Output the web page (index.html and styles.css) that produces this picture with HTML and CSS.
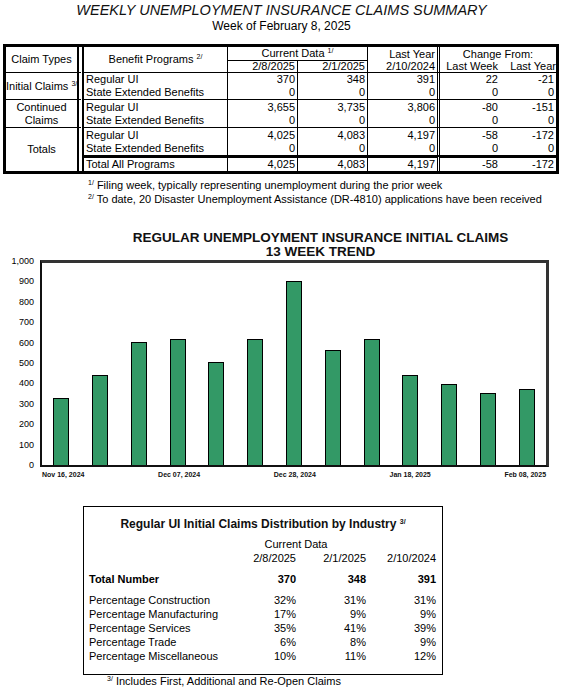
FILE: index.html
```html
<!DOCTYPE html>
<html lang="en">
<head>
    <meta charset="UTF-8">
    <meta name="viewport" content="width=device-width, initial-scale=1.0">
    <title>Weekly Unemployment Insurance Claims Summary</title>
    <link rel="stylesheet" href="styles.css">
</head>
<body>
    <div class="page">
        <div class="header">
            <h1>WEEKLY UNEMPLOYMENT INSURANCE CLAIMS SUMMARY</h1>
            <div class="subtitle">Week of February 8, 2025</div>
        </div>

        <!-- Summary table -->
        <table class="summary">
            <colgroup>
                <col class="c-type">
                <col class="c-prog">
                <col class="c-num">
                <col class="c-num">
                <col class="c-year">
                <col class="c-week">
                <col class="c-last">
            </colgroup>
            <thead>
                <tr class="head-1">
                    <th class="ct end" rowspan="2">Claim Types</th>
                    <th class="prog end" rowspan="2">Benefit Programs <sup>2/</sup></th>
                    <th class="n end" colspan="2">Current Data <sup>1/</sup></th>
                    <th class="ly right">Last Year</th>
                    <th colspan="2">Change From:</th>
                </tr>
                <tr class="head-2">
                    <th class="n end right">2/8/2025</th>
                    <th class="n end right">2/1/2025</th>
                    <th class="ly end right">2/10/2024</th>
                    <th class="end right">Last Week</th>
                    <th class="end right last">Last Year</th>
                </tr>
            </thead>
            <tbody>
                <tr>
                    <td class="ct end" rowspan="2">Initial Claims <sup>3/</sup></td>
                    <td class="prog">Regular UI</td>
                    <td class="n">370</td>
                    <td class="n">348</td>
                    <td class="ly">391</td>
                    <td class="num">22</td>
                    <td class="num">-21</td>
                </tr>
                <tr class="end">
                    <td class="prog">State Extended Benefits</td>
                    <td class="n">0</td>
                    <td class="n">0</td>
                    <td class="ly">0</td>
                    <td class="num">0</td>
                    <td class="num">0</td>
                </tr>
                <tr class="tall">
                    <td class="ct end" rowspan="2">Continued<br>Claims</td>
                    <td class="prog">Regular UI</td>
                    <td class="n">3,655</td>
                    <td class="n">3,735</td>
                    <td class="ly">3,806</td>
                    <td class="num">-80</td>
                    <td class="num">-151</td>
                </tr>
                <tr class="end">
                    <td class="prog">State Extended Benefits</td>
                    <td class="n">0</td>
                    <td class="n">0</td>
                    <td class="ly">0</td>
                    <td class="num">0</td>
                    <td class="num">0</td>
                </tr>
                <tr class="tall">
                    <td class="ct" rowspan="3">Totals</td>
                    <td class="prog">Regular UI</td>
                    <td class="n">4,025</td>
                    <td class="n">4,083</td>
                    <td class="ly">4,197</td>
                    <td class="num">-58</td>
                    <td class="num">-172</td>
                </tr>
                <tr>
                    <td class="prog">State Extended Benefits</td>
                    <td class="n">0</td>
                    <td class="n">0</td>
                    <td class="ly">0</td>
                    <td class="num">0</td>
                    <td class="num">0</td>
                </tr>
                <tr class="grand">
                    <td class="prog">Total All Programs</td>
                    <td class="n">4,025</td>
                    <td class="n">4,083</td>
                    <td class="ly">4,197</td>
                    <td class="num">-58</td>
                    <td class="num">-172</td>
                </tr>
            </tbody>
        </table>

        <div class="notes">
            <div><sup>1/</sup> Filing week, typically representing unemployment during the prior week</div>
            <div><sup>2/</sup> To date, 20 Disaster Unemployment Assistance (DR-4810) applications have been received</div>
        </div>

        <!-- 13 week bar chart -->
        <div class="chart">
            <h2 class="chart-title">REGULAR UNEMPLOYMENT INSURANCE INITIAL CLAIMS<br>13 WEEK TREND</h2>
            <div class="chart-body">
                <div class="y-axis">
                    <span>1,000</span><span>900</span><span>800</span><span>700</span><span>600</span>
                    <span>500</span><span>400</span><span>300</span><span>200</span><span>100</span><span>0</span>
                </div>
                <div class="plot">
                    <div class="slot"><div class="bar" style="height: 67px"></div></div>
                    <div class="slot"><div class="bar" style="height: 90px"></div></div>
                    <div class="slot"><div class="bar" style="height: 123px"></div></div>
                    <div class="slot"><div class="bar" style="height: 126px"></div></div>
                    <div class="slot"><div class="bar" style="height: 103px"></div></div>
                    <div class="slot"><div class="bar" style="height: 126px"></div></div>
                    <div class="slot"><div class="bar" style="height: 184px"></div></div>
                    <div class="slot"><div class="bar" style="height: 115px"></div></div>
                    <div class="slot"><div class="bar" style="height: 126px"></div></div>
                    <div class="slot"><div class="bar" style="height: 90px"></div></div>
                    <div class="slot"><div class="bar" style="height: 81px"></div></div>
                    <div class="slot"><div class="bar" style="height: 72px"></div></div>
                    <div class="slot"><div class="bar" style="height: 76px"></div></div>
                </div>
            </div>
            <div class="x-axis">
                <div class="slot"><span>Nov 16, 2024</span></div>
                <div class="slot"></div>
                <div class="slot"></div>
                <div class="slot"><span>Dec 07, 2024</span></div>
                <div class="slot"></div>
                <div class="slot"></div>
                <div class="slot"><span>Dec 28, 2024</span></div>
                <div class="slot"></div>
                <div class="slot"></div>
                <div class="slot"><span>Jan 18, 2025</span></div>
                <div class="slot"></div>
                <div class="slot"></div>
                <div class="slot"><span>Feb 08, 2025</span></div>
            </div>
        </div>

        <!-- Industry distribution -->
        <div class="industry">
            <h3>Regular UI Initial Claims Distribution by Industry <sup>3/</sup></h3>
            <table class="dist">
                <colgroup>
                    <col class="d-label"><col class="d-num"><col class="d-num"><col class="d-num">
                </colgroup>
                <tr>
                    <td></td>
                    <td class="center" colspan="2">Current Data</td>
                    <td></td>
                </tr>
                <tr>
                    <td></td>
                    <td class="num">2/8/2025</td>
                    <td class="num">2/1/2025</td>
                    <td class="num">2/10/2024</td>
                </tr>
                <tr class="spaced bold">
                    <td>Total Number</td>
                    <td class="num">370</td>
                    <td class="num">348</td>
                    <td class="num">391</td>
                </tr>
                <tr class="spaced">
                    <td>Percentage Construction</td>
                    <td class="num">32%</td>
                    <td class="num">31%</td>
                    <td class="num">31%</td>
                </tr>
                <tr>
                    <td>Percentage Manufacturing</td>
                    <td class="num">17%</td>
                    <td class="num">9%</td>
                    <td class="num">9%</td>
                </tr>
                <tr>
                    <td>Percentage Services</td>
                    <td class="num">35%</td>
                    <td class="num">41%</td>
                    <td class="num">39%</td>
                </tr>
                <tr>
                    <td>Percentage Trade</td>
                    <td class="num">6%</td>
                    <td class="num">8%</td>
                    <td class="num">9%</td>
                </tr>
                <tr>
                    <td>Percentage Miscellaneous</td>
                    <td class="num">10%</td>
                    <td class="num">11%</td>
                    <td class="num">12%</td>
                </tr>
            </table>
        </div>
        <div class="note-3"><sup>3/</sup> Includes First, Additional and Re-Open Claims</div>
    </div>
</body>
</html>
```

FILE: styles.css
```css
body {
    margin: 0;
    font-family: "Liberation Sans", Arial, sans-serif;
    color: #000;
    background: #fff;
}

.page {
    width: 563px;
}

sup {
    font-size: 7px;
    line-height: 0;
    vertical-align: 4px;
}

/* Header */
.header {
    text-align: center;
    padding-top: 2px;
}

h1 {
    margin: 0;
    font-size: 14.5px;
    font-style: italic;
    font-weight: normal;
    line-height: 17px;
    color: #111;
}

.subtitle {
    font-size: 12px;
    line-height: 14px;
}

/* Summary table */
.summary {
    border-collapse: separate;
    border-spacing: 0;
    border: 3px solid #000;
    width: 556px;
    table-layout: fixed;
    margin: 11px 0 0 3px;
    font-size: 11px;
}

.c-type { width: 78px; }
.c-prog { width: 144px; }
.c-num { width: 70px; }
.c-year { width: 72px; }
.c-week { width: 60px; }
.c-last { width: 56px; }

.summary th,
.summary td {
    padding: 0 2px;
    height: 13px;
    line-height: 13px;
    font-weight: normal;
    white-space: nowrap;
    overflow: hidden;
}

.summary .head-2 th {
    height: 11px;
    line-height: 11px;
}

.summary .tall td {
    height: 14px;
}

.summary .ct {
    text-align: center;
    border-right: 7px double #000;
    padding: 0;
}

.summary .prog {
    border-right: 1px solid #000;
    text-align: left;
}

.summary th.prog {
    text-align: center;
}

.summary .n {
    border-right: 1px solid #000;
    text-align: right;
}

.summary th.n[colspan] {
    text-align: center;
}

.summary .ly {
    border-right: 3px double #000;
    text-align: right;
}

.summary .num,
.summary .right {
    text-align: right;
}

.summary .last {
    padding-right: 0;
}

.summary .end,
.summary tr.end td {
    border-bottom: 1px solid #000;
}

.summary tr.grand td {
    border-top: 3px solid #000;
}

/* Footnotes */
.notes {
    margin: 4px 0 0 88px;
    font-size: 11px;
    line-height: 14px;
}

/* Chart */
.chart {
    margin-top: 25px;
}

.chart-title {
    margin: 0 0 1px 78px;
    font-size: 13.5px;
    line-height: 14px;
    text-align: center;
    color: #111;
}

.chart-body {
    display: flex;
}

.y-axis {
    width: 40px;
    height: 214px;
    margin-top: -4px;
    padding-right: 6px;
    box-sizing: border-box;
    display: flex;
    flex-direction: column;
    justify-content: space-between;
    align-items: flex-end;
    font-size: 9px;
    line-height: 10px;
}

.plot {
    width: 504px;
    height: 202px;
    border-top: 3px solid #333;
    border-right: 3px solid #333;
    border-left: 2px solid #111;
    border-bottom: 2px solid #111;
    display: flex;
}

.slot {
    flex: 1;
    display: flex;
    justify-content: center;
    align-items: flex-end;
}

.bar {
    width: 16px;
    box-sizing: border-box;
    border: 1px solid #000;
    border-bottom: none;
    background-color: #339966;
}

.x-axis {
    display: flex;
    width: 504px;
    height: 10px;
    margin-left: 42px;
    font-size: 7px;
    font-weight: bold;
    line-height: 10px;
    color: #111;
}

.x-axis span {
    white-space: nowrap;
}

/* Industry box */
.industry {
    width: 360px;
    height: 169px;
    box-sizing: border-box;
    margin: 26px 0 0 83px;
    padding: 10px 0 0 5px;
    border: 1px solid #000;
}

.industry h3 {
    margin: 0 0 6px -5px;
    font-size: 12px;
    line-height: 14px;
    text-align: center;
    color: #111;
}

.dist {
    border-collapse: collapse;
    table-layout: fixed;
    width: 347px;
    font-size: 11px;
}

.d-label { width: 137px; }
.d-num { width: 70px; }

.dist td {
    padding: 0;
    line-height: 14px;
    white-space: nowrap;
}

.dist .num {
    text-align: right;
}

.dist .center {
    text-align: center;
}

.dist .spaced td {
    padding-top: 7px;
}

.dist .bold td {
    font-weight: bold;
}

.note-3 {
    margin: 0 0 0 107px;
    font-size: 11px;
    line-height: 12px;
}
```
